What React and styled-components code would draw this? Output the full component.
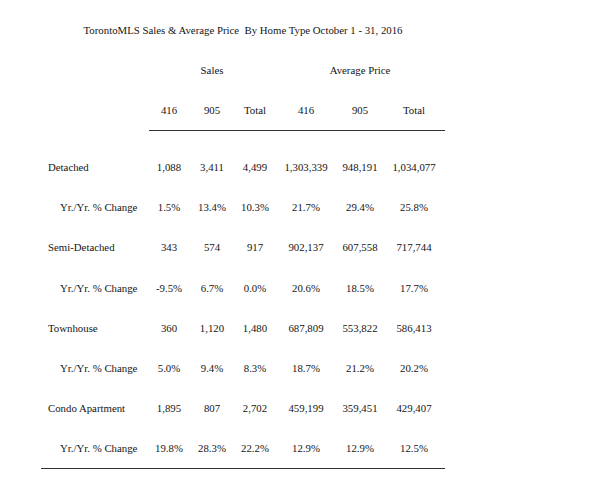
import React from "react";
import styled, { createGlobalStyle } from "styled-components";

const GlobalStyle = createGlobalStyle`
  html, body {
    margin: 0;
    padding: 0;
    background: #fff;
  }
`;

const columns = [
  { key: "s416", label: "416", width: 40 },
  { key: "s905", label: "905", width: 46 },
  { key: "stot", label: "Total", width: 40 },
  { key: "p416", label: "416", width: 62 },
  { key: "p905", label: "905", width: 46 },
  { key: "ptot", label: "Total", width: 62 },
];

const rows = [
  { label: "Detached", values: ["1,088", "3,411", "4,499", "1,303,339", "948,191", "1,034,077"] },
  { label: "Yr./Yr. % Change", sub: true, values: ["1.5%", "13.4%", "10.3%", "21.7%", "29.4%", "25.8%"] },
  { label: "Semi-Detached", values: ["343", "574", "917", "902,137", "607,558", "717,744"] },
  { label: "Yr./Yr. % Change", sub: true, values: ["-9.5%", "6.7%", "0.0%", "20.6%", "18.5%", "17.7%"] },
  { label: "Townhouse", values: ["360", "1,120", "1,480", "687,809", "553,822", "586,413"] },
  { label: "Yr./Yr. % Change", sub: true, values: ["5.0%", "9.4%", "8.3%", "18.7%", "21.2%", "20.2%"] },
  { label: "Condo Apartment", values: ["1,895", "807", "2,702", "459,199", "359,451", "429,407"] },
  { label: "Yr./Yr. % Change", sub: true, values: ["19.8%", "28.3%", "22.2%", "12.9%", "12.9%", "12.5%"] },
];

const Page = styled.div`
  padding: 10px 0 0 41px;
  font-family: "Liberation Serif", "Times New Roman", serif;
  font-size: 10.8px;
  color: #151515;
`;

const Table = styled.table`
  width: 404px;
  table-layout: fixed;
  border-collapse: collapse;
`;

const Caption = styled.caption`
  height: 40px;
  line-height: 40px;
  text-align: center;
  white-space: pre;
`;

const GroupHead = styled.th`
  height: 40px;
  padding: 0;
  font-weight: normal;
  text-align: center;
`;

const ColHead = styled.th`
  height: 40px;
  padding: 0;
  font-weight: normal;
  text-align: center;
  border-bottom: 1px solid #333;
`;

const Spacer = styled.td`
  height: 16px;
  padding: 0;
`;

const Row = styled.tr`
  height: 40.2px;
  &:last-child td {
    border-bottom: 1px solid #333;
  }
`;

const Label = styled.td`
  padding: 0 0 0 ${(p) => (p.$sub ? 19 : 7)}px;
  white-space: nowrap;
`;

const Cell = styled.td`
  padding: 0;
  text-align: center;
  white-space: nowrap;
`;

export default function App() {
  return (
    <Page>
      <GlobalStyle />
      <Table>
        <Caption>{"TorontoMLS Sales & Average Price  By Home Type October 1 - 31, 2016"}</Caption>
        <colgroup>
          <col style={{ width: 108 }} />
          {columns.map((c) => (
            <col key={c.key} style={{ width: c.width }} />
          ))}
        </colgroup>
        <thead>
          <tr>
            <GroupHead />
            <GroupHead colSpan={3}>Sales</GroupHead>
            <GroupHead colSpan={3}>Average Price</GroupHead>
          </tr>
          <tr>
            <th style={{ padding: 0 }} />
            {columns.map((c) => (
              <ColHead key={c.key}>{c.label}</ColHead>
            ))}
          </tr>
        </thead>
        <tbody>
          <tr>
            <Spacer colSpan={7} />
          </tr>
          {rows.map((r, i) => (
            <Row key={i}>
              <Label $sub={r.sub}>{r.label}</Label>
              {r.values.map((v, j) => (
                <Cell key={j}>{v}</Cell>
              ))}
            </Row>
          ))}
        </tbody>
      </Table>
    </Page>
  );
}
